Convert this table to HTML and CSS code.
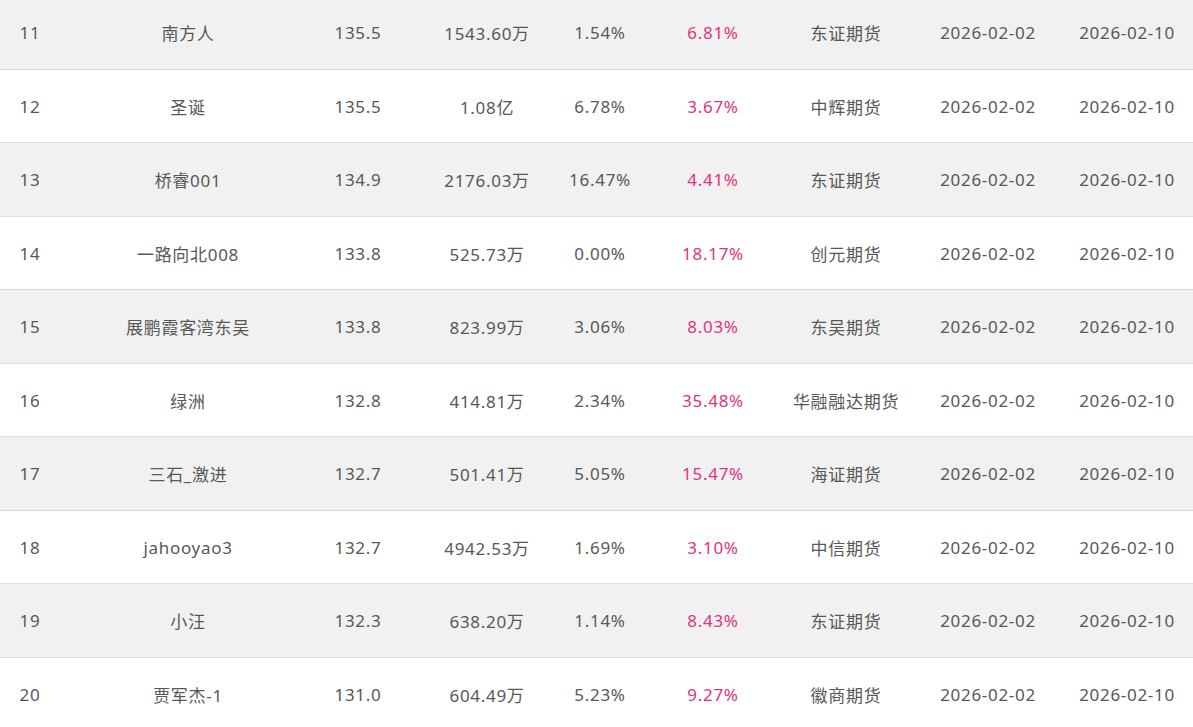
FILE: index.html
```html
<!DOCTYPE html>
<html lang="zh-CN">
<head>
<meta charset="utf-8">
<title>排行榜</title>
<link rel="stylesheet" href="styles.css">
</head>
<body>
<div class="table">
  <div class="row odd"><div class="c c1">11</div><div class="c c2">南方人</div><div class="c c3">135.5</div><div class="c c4">1543.60万</div><div class="c c5">1.54%</div><div class="c c6 pink">6.81%</div><div class="c c7">东证期货</div><div class="c c8">2026-02-02</div><div class="c c9">2026-02-10</div></div>
  <div class="row"><div class="c c1">12</div><div class="c c2">圣诞</div><div class="c c3">135.5</div><div class="c c4">1.08亿</div><div class="c c5">6.78%</div><div class="c c6 pink">3.67%</div><div class="c c7">中辉期货</div><div class="c c8">2026-02-02</div><div class="c c9">2026-02-10</div></div>
  <div class="row odd"><div class="c c1">13</div><div class="c c2">桥睿001</div><div class="c c3">134.9</div><div class="c c4">2176.03万</div><div class="c c5">16.47%</div><div class="c c6 pink">4.41%</div><div class="c c7">东证期货</div><div class="c c8">2026-02-02</div><div class="c c9">2026-02-10</div></div>
  <div class="row"><div class="c c1">14</div><div class="c c2">一路向北008</div><div class="c c3">133.8</div><div class="c c4">525.73万</div><div class="c c5">0.00%</div><div class="c c6 pink">18.17%</div><div class="c c7">创元期货</div><div class="c c8">2026-02-02</div><div class="c c9">2026-02-10</div></div>
  <div class="row odd"><div class="c c1">15</div><div class="c c2">展鹏霞客湾东吴</div><div class="c c3">133.8</div><div class="c c4">823.99万</div><div class="c c5">3.06%</div><div class="c c6 pink">8.03%</div><div class="c c7">东吴期货</div><div class="c c8">2026-02-02</div><div class="c c9">2026-02-10</div></div>
  <div class="row"><div class="c c1">16</div><div class="c c2">绿洲</div><div class="c c3">132.8</div><div class="c c4">414.81万</div><div class="c c5">2.34%</div><div class="c c6 pink">35.48%</div><div class="c c7">华融融达期货</div><div class="c c8">2026-02-02</div><div class="c c9">2026-02-10</div></div>
  <div class="row odd"><div class="c c1">17</div><div class="c c2">三石_激进</div><div class="c c3">132.7</div><div class="c c4">501.41万</div><div class="c c5">5.05%</div><div class="c c6 pink">15.47%</div><div class="c c7">海证期货</div><div class="c c8">2026-02-02</div><div class="c c9">2026-02-10</div></div>
  <div class="row"><div class="c c1">18</div><div class="c c2">jahooyao3</div><div class="c c3">132.7</div><div class="c c4">4942.53万</div><div class="c c5">1.69%</div><div class="c c6 pink">3.10%</div><div class="c c7">中信期货</div><div class="c c8">2026-02-02</div><div class="c c9">2026-02-10</div></div>
  <div class="row odd"><div class="c c1">19</div><div class="c c2">小汪</div><div class="c c3">132.3</div><div class="c c4">638.20万</div><div class="c c5">1.14%</div><div class="c c6 pink">8.43%</div><div class="c c7">东证期货</div><div class="c c8">2026-02-02</div><div class="c c9">2026-02-10</div></div>
  <div class="row"><div class="c c1">20</div><div class="c c2">贾军杰-1</div><div class="c c3">131.0</div><div class="c c4">604.49万</div><div class="c c5">5.23%</div><div class="c c6 pink">9.27%</div><div class="c c7">徽商期货</div><div class="c c8">2026-02-02</div><div class="c c9">2026-02-10</div></div>
</div>
</body>
</html>
```

FILE: styles.css
```css
html, body {
  margin: 0;
  padding: 0;
  background: #ffffff;
  overflow: hidden;
}
body {
  font-family: "Noto Sans", "Noto Sans CJK SC", sans-serif;
  font-size: 17px;
  color: #585858;
  letter-spacing: 0.7px;
}
.table {
  width: 1193px;
  margin-top: -4px;
}
.row {
  display: grid;
  grid-template-columns: 60px 256px 84px 174px 52px 174px 92px 192px 86px;
  height: 72.5px;
  border-bottom: 1px solid #dddddd;
  background: #ffffff;
}
.row.odd {
  background: #f1f1f1;
}
.c {
  display: flex;
  align-items: center;
  justify-content: center;
  white-space: nowrap;
  overflow: visible;
  padding-top: 1px;
}
.pink {
  color: #e5317b;
}
```
